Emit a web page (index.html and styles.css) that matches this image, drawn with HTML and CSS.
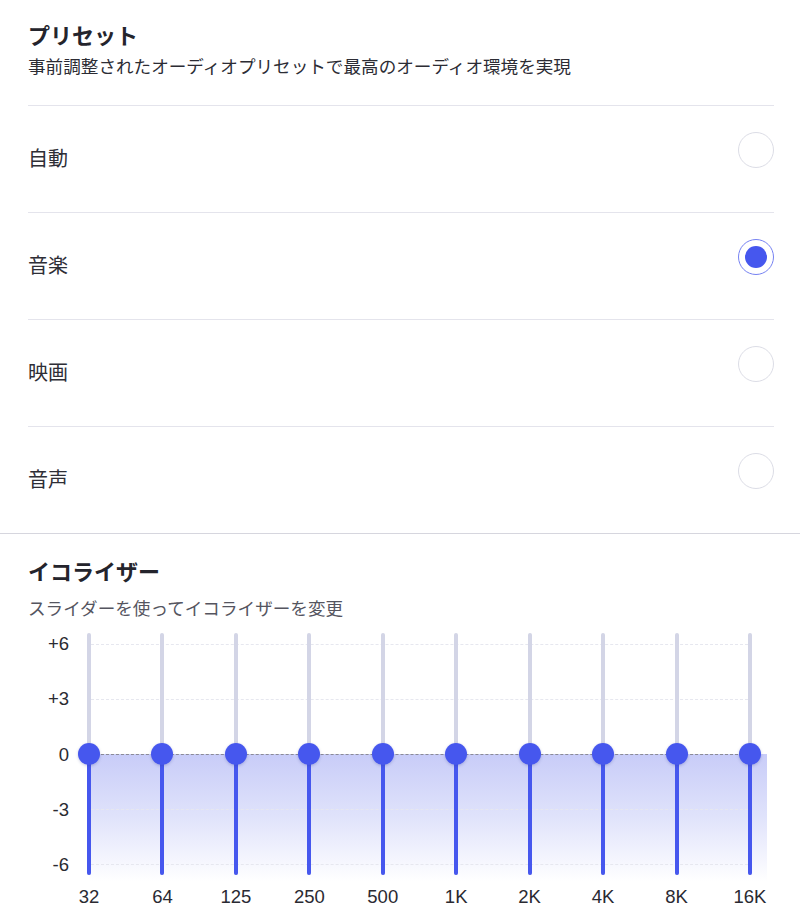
FILE: index.html
```html
<!DOCTYPE html>
<html lang="ja">
<head>
<meta charset="utf-8">
<link rel="stylesheet" href="styles.css">
</head>
<body>
<section class="presets">
  <h1 class="title">プリセット</h1>
  <p class="subtitle">事前調整されたオーディオプリセットで最高のオーディオ環境を実現</p>
  <ul class="list">
    <li class="row"><span class="label">自動</span><span class="radio"></span></li>
    <li class="row"><span class="label">音楽</span><span class="radio checked"></span></li>
    <li class="row"><span class="label">映画</span><span class="radio"></span></li>
    <li class="row"><span class="label">音声</span><span class="radio"></span></li>
  </ul>
</section>
<section class="eq">
  <h2 class="title">イコライザー</h2>
  <p class="eq-sub">スライダーを使ってイコライザーを変更</p>
  <div class="chart">
    <div class="yaxis">
      <span>+6</span><span>+3</span><span>0</span><span>-3</span><span>-6</span>
    </div>
    <div class="plot">
      <div class="fill"></div>
      <div class="grid g1"></div>
      <div class="grid g2"></div>
      <div class="grid zero"></div>
      <div class="grid g4"></div>
      <div class="grid g5"></div>
      <div class="sliders">
        <div class="slider"><div class="track"></div><div class="active"></div><div class="thumb"></div></div>
        <div class="slider"><div class="track"></div><div class="active"></div><div class="thumb"></div></div>
        <div class="slider"><div class="track"></div><div class="active"></div><div class="thumb"></div></div>
        <div class="slider"><div class="track"></div><div class="active"></div><div class="thumb"></div></div>
        <div class="slider"><div class="track"></div><div class="active"></div><div class="thumb"></div></div>
        <div class="slider"><div class="track"></div><div class="active"></div><div class="thumb"></div></div>
        <div class="slider"><div class="track"></div><div class="active"></div><div class="thumb"></div></div>
        <div class="slider"><div class="track"></div><div class="active"></div><div class="thumb"></div></div>
        <div class="slider"><div class="track"></div><div class="active"></div><div class="thumb"></div></div>
        <div class="slider"><div class="track"></div><div class="active"></div><div class="thumb"></div></div>
      </div>
    </div>
  </div>
  <div class="xaxis">
    <span>32</span><span>64</span><span>125</span><span>250</span><span>500</span><span>1K</span><span>2K</span><span>4K</span><span>8K</span><span>16K</span>
  </div>
</section>
</body>
</html>
```

FILE: styles.css
```css
* { box-sizing: border-box; }
html, body { margin: 0; padding: 0; background: #fff; }
body {
  font-family: "Liberation Sans", "Noto Sans CJK JP", sans-serif;
  color: #24242c;
  width: 800px;
}
.title {
  margin: 0;
  font-family: "Noto Sans CJK JP", sans-serif;
  font-size: 22px;
  line-height: 28px;
  font-weight: 700;
  color: #24242c;
}
.presets {
  padding: 20px 26px 0 28px;
  border-bottom: 1px solid #d6d6de;
}
.subtitle {
  margin: 6px 0 0;
  font-family: "Noto Sans CJK JP", sans-serif;
  font-size: 17.6px;
  line-height: 24px;
  color: #2c2c34;
}
.list {
  list-style: none;
  margin: 27px 0 0;
  padding: 0;
}
.row {
  height: 107px;
  border-top: 1px solid #e4e4ec;
  display: flex;
  justify-content: space-between;
  align-items: flex-start;
}
.label {
  margin-top: 39px;
  font-family: "Noto Sans CJK JP", sans-serif;
  font-size: 20px;
  line-height: 26px;
  color: #2e2e36;
}
.radio {
  margin-top: 26px;
  width: 36px;
  height: 36px;
  border-radius: 50%;
  border: 1px solid #dcdde6;
  display: flex;
  align-items: center;
  justify-content: center;
}
.radio.checked { border-color: #7682f2; }
.radio.checked::after {
  content: "";
  width: 22px;
  height: 22px;
  border-radius: 50%;
  background: #4657ee;
}
.eq {
  padding: 22px 26px 0 28px;
}
.eq-sub {
  margin: 12px 0 0;
  font-family: "Noto Sans CJK JP", sans-serif;
  font-size: 17.6px;
  line-height: 24px;
  color: #55555f;
}
.chart {
  margin-top: 13px;
  display: flex;
}
.yaxis {
  width: 41px;
  height: 242px;
  padding-top: 1px;
  display: flex;
  flex-direction: column;
  justify-content: space-between;
  align-items: flex-end;
  font-size: 18.5px;
  line-height: 20px;
  color: #2a2a32;
}
.plot {
  position: relative;
  width: 701px;
  height: 242px;
}
.fill {
  position: absolute;
  left: 20px;
  right: 3px;
  top: 121px;
  bottom: -6px;
  background: linear-gradient(to bottom, #c8ccf8 0%, #e0e3fb 50%, rgba(240,241,253,0.5) 88%, rgba(255,255,255,0) 100%);
}
.grid {
  position: absolute;
  left: 22px;
  right: 22px;
  height: 0;
  border-top: 1px dashed #e6e7ef;
}
.g1 { top: 11px; }
.g2 { top: 66px; }
.zero { top: 121px; border-top-color: #8a8a96; }
.g4 { top: 176px; }
.g5 { top: 231px; }
.sliders {
  position: relative;
  height: 100%;
  display: flex;
  justify-content: space-between;
}
.slider {
  position: relative;
  width: 40px;
  height: 100%;
}
.track {
  position: absolute;
  left: 18px;
  width: 4px;
  top: 0;
  bottom: 0;
  border-radius: 2px;
  background: #d3d5e6;
}
.active {
  position: absolute;
  left: 18px;
  width: 4px;
  top: 121px;
  bottom: 0;
  border-radius: 2px;
  background: #4657ee;
}
.thumb {
  position: absolute;
  left: 9px;
  top: 110px;
  width: 22px;
  height: 22px;
  border-radius: 50%;
  background: #4657ee;
  box-shadow: 0 1px 3px rgba(40, 50, 140, 0.25);
}
.xaxis {
  margin: 12px 0 0 41px;
  width: 701px;
  display: flex;
  justify-content: space-between;
  font-size: 18.5px;
  line-height: 20px;
  color: #2a2a32;
}
.xaxis span {
  width: 40px;
  text-align: center;
  white-space: nowrap;
}
```
